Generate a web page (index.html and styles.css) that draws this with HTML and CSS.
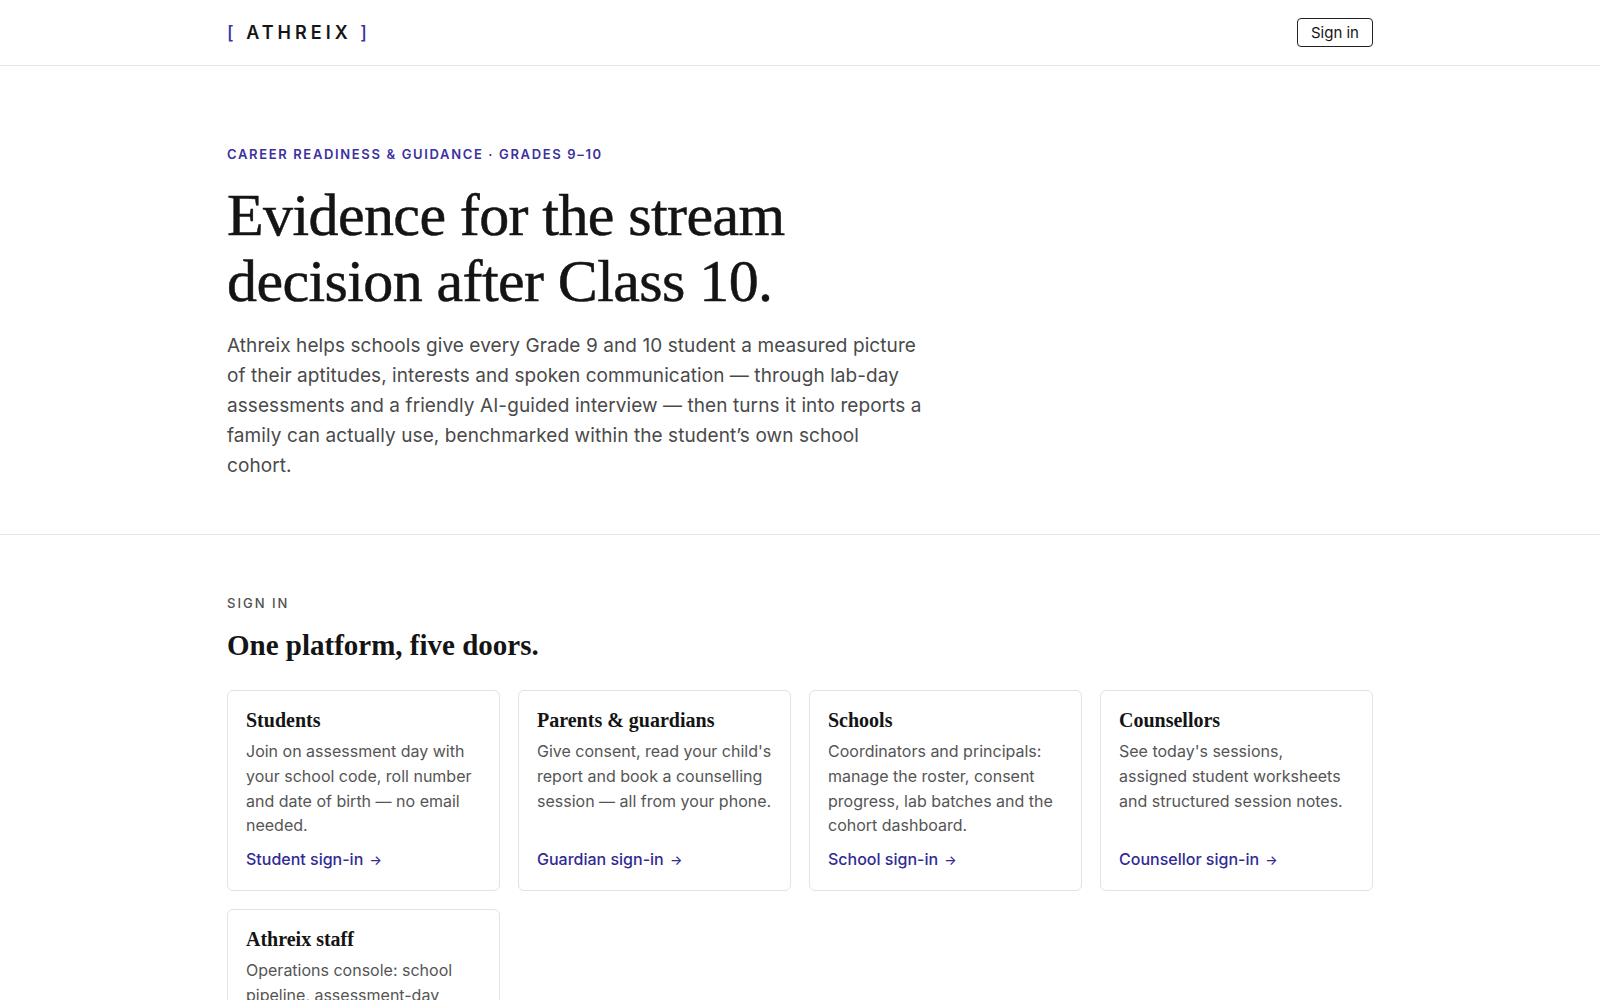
FILE: index.html
```html
<!DOCTYPE html>
<html lang="en">
<head>
    <meta charset="UTF-8">
    <meta name="viewport" content="width=device-width, initial-scale=1.0">
    <title>Athreix — Career readiness &amp; guidance</title>
    <link rel="stylesheet" href="styles.css">
</head>
<body>
    <header class="site-header">
        <div class="wrap header-inner">
            <a class="logo" href="#"><span class="bracket">[</span> ATHREIX <span class="bracket">]</span></a>
            <a class="btn-outline" href="#signin">Sign in</a>
        </div>
    </header>

    <section class="hero">
        <div class="wrap">
            <div class="eyebrow">Career readiness &amp; guidance · Grades 9–10</div>
            <h1>Evidence for the stream decision after Class 10.</h1>
            <p class="lead">Athreix helps schools give every Grade 9 and 10 student a measured picture of their aptitudes, interests and spoken communication — through lab-day assessments and a friendly AI-guided interview — then turns it into reports a family can actually use, benchmarked within the student’s own school cohort.</p>
        </div>
    </section>

    <section class="doors" id="signin">
        <div class="wrap">
            <div class="section-label">Sign in</div>
            <h2>One platform, five doors.</h2>

            <div class="door-grid">
                <div class="door">
                    <h3>Students</h3>
                    <p>Join on assessment day with your school code, roll number and date of birth — no email needed.</p>
                    <a href="#">Student sign-in <span class="arrow">→</span></a>
                </div>
                <div class="door">
                    <h3>Parents &amp; guardians</h3>
                    <p>Give consent, read your child's report and book a counselling session — all from your phone.</p>
                    <a href="#">Guardian sign-in <span class="arrow">→</span></a>
                </div>
                <div class="door">
                    <h3>Schools</h3>
                    <p>Coordinators and principals: manage the roster, consent progress, lab batches and the cohort dashboard.</p>
                    <a href="#">School sign-in <span class="arrow">→</span></a>
                </div>
                <div class="door">
                    <h3>Counsellors</h3>
                    <p>See today's sessions, assigned student worksheets and structured session notes.</p>
                    <a href="#">Counsellor sign-in <span class="arrow">→</span></a>
                </div>
                <div class="door">
                    <h3>Athreix staff</h3>
                    <p>Operations console: school pipeline, assessment-day scheduling, scoring review and report release.</p>
                    <a href="#">Staff sign-in <span class="arrow">→</span></a>
                </div>
            </div>
        </div>
    </section>
</body>
</html>
```

FILE: styles.css
```css
body {
    margin: 0;
    font-family: 'Inter', 'Noto Sans', sans-serif;
    color: #1a1a1a;
    background: #fff;
}

a {
    text-decoration: none;
}

.wrap {
    max-width: 1146px;
    margin: 0 auto;
}

/* top bar */
.site-header {
    border-bottom: 1px solid #e6e6e6;
}

.header-inner {
    height: 65px;
    display: flex;
    align-items: center;
    justify-content: space-between;
}

.logo {
    font-size: 18px;
    font-weight: 600;
    letter-spacing: 4px;
    color: #151515;
}

.logo .bracket {
    color: #3b31a0;
    font-weight: 500;
}

.btn-outline {
    font-size: 15px;
    color: #151515;
    border: 1px solid #222;
    border-radius: 4px;
    padding: 4px 13px;
    line-height: 19px;
}

/* hero */
.hero {
    padding: 78px 0 53px;
    border-bottom: 1px solid #e6e6e6;
}

.eyebrow {
    font-size: 13px;
    font-weight: 600;
    letter-spacing: 1.65px;
    text-transform: uppercase;
    color: #3b31a0;
    line-height: 20px;
}

.hero h1 {
    font-family: 'Liberation Serif', 'DejaVu Serif', serif;
    font-weight: 400;
    font-size: 60px;
    line-height: 66px;
    color: #141414;
    margin: 18px 0 17px;
    max-width: 620px;
    letter-spacing: -0.6px;
    -webkit-text-stroke: 0.5px #141414;
}

.lead {
    font-size: 19px;
    line-height: 30px;
    letter-spacing: 0.08px;
    color: #4a4a4a;
    max-width: 698px;
    margin: 0;
}

/* sign-in doors */
.doors {
    padding: 58px 0 40px;
}

.section-label {
    font-size: 13px;
    font-weight: 500;
    letter-spacing: 2px;
    text-transform: uppercase;
    color: #505050;
    line-height: 20px;
}

.doors h2 {
    font-family: 'Liberation Serif', 'DejaVu Serif', serif;
    font-weight: 700;
    font-size: 29px;
    line-height: 36px;
    color: #141414;
    margin: 14px 0 27px;
}

.door-grid {
    display: grid;
    grid-template-columns: repeat(4, 1fr);
    gap: 18px;
}

.door {
    border: 1px solid #e3e3e3;
    border-radius: 6px;
    padding: 16px 18px 18px;
    display: flex;
    flex-direction: column;
}

.door h3 {
    font-family: 'Liberation Serif', 'DejaVu Serif', serif;
    font-weight: 700;
    font-size: 20px;
    line-height: 26px;
    margin: 0 0 6px;
    color: #141414;
}

.door p {
    font-size: 16px;
    line-height: 24.8px;
    color: #555;
    margin: 0 0 9px;
}

.door a {
    margin-top: auto;
    font-size: 16px;
    font-weight: 500;
    color: #312a94;
    line-height: 24px;
}

.door .arrow {
    font-size: 13px;
    margin-left: 2px;
}
```
